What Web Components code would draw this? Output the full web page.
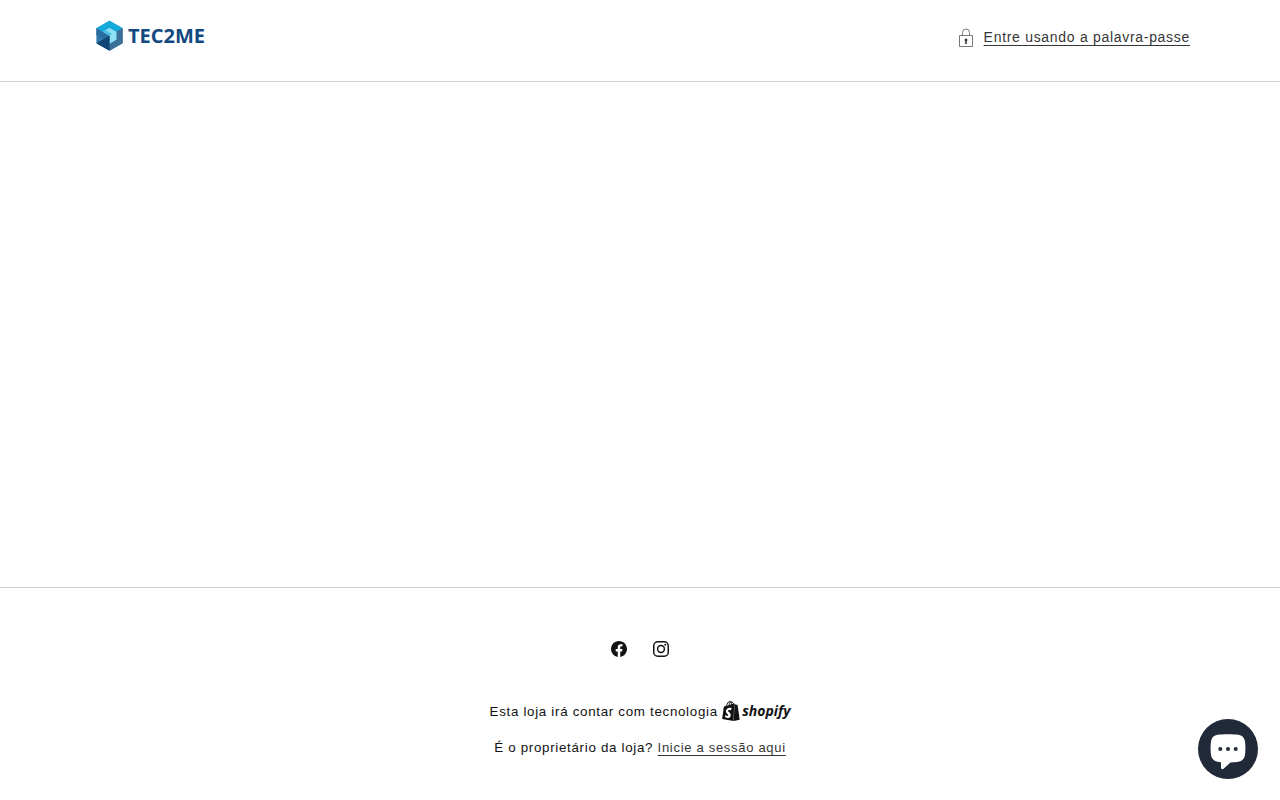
<!DOCTYPE html>
<html lang="pt-PT">
<head>
<meta charset="utf-8">
<meta name="viewport" content="width=device-width, initial-scale=1">
<title>TEC2ME</title>
<style>
  html {
    font-size: 62.5%;
  }
  body {
    margin: 0;
    background: #fff;
    color: #121212;
    font-family: "Liberation Sans", Arial, sans-serif;
    font-size: 1.6rem;
    letter-spacing: 0.07rem;
  }
</style>
</head>
<body>
<password-page>
  <password-header slot="header">
    <store-logo slot="logo">TEC2ME</store-logo>
    <password-opener>Entre usando a palavra-passe</password-opener>
  </password-header>
  <password-footer slot="footer">
    <social-link slot="social" name="facebook" href="#facebook"></social-link>
    <social-link slot="social" name="instagram" href="#instagram"></social-link>
    <small slot="text">Esta loja irá contar com tecnologia <shopify-mark>shopify</shopify-mark></small>
    <small slot="text">É o proprietário da loja? <text-link href="#admin">Inicie a sessão aqui</text-link></small>
  </password-footer>
</password-page>
<chat-button></chat-button>

<script>
class PasswordPage extends HTMLElement {
  constructor() {
    super();
    this.attachShadow({ mode: 'open' }).innerHTML = `
      <style>
        :host {
          display: flex;
          flex-direction: column;
          min-height: 100vh;
        }
        main {
          flex: 1;
        }
      </style>
      <slot name="header"></slot>
      <main></main>
      <slot name="footer"></slot>
    `;
  }
}

class PasswordHeader extends HTMLElement {
  constructor() {
    super();
    this.attachShadow({ mode: 'open' }).innerHTML = `
      <style>
        :host {
          display: block;
          border-bottom: 1px solid #d0d0d0;
        }
        header {
          display: flex;
          align-items: flex-start;
          justify-content: space-between;
          max-width: 1100px;
          margin: 0 auto;
          padding: 20px 50px 29px;
        }
      </style>
      <header>
        <slot name="logo"></slot>
        <slot></slot>
      </header>
    `;
  }
}

class StoreLogo extends HTMLElement {
  constructor() {
    super();
    this.attachShadow({ mode: 'open' }).innerHTML = `
      <style>
        :host {
          display: flex;
          align-items: center;
          gap: 5px;
          height: 32px;
          padding-left: 6px;
          color: #12497f;
          font: bold 20px/32px "Open Sans", sans-serif;
          letter-spacing: normal;
        }
        svg {
          width: 27px;
          height: 32px;
        }
      </style>
      <svg viewBox="0 0 27 32" aria-hidden="true">
        <path fill="#2f78a8" d="M13.500 .8 26.600 8.300v15L13.500 30.800.4 23.300v-15z"/>
        <path fill="#14aadb" d="M13.500 .8 26.600 8.300 20.500 11.800 13.500 7.800 6.500 11.800.4 8.300z"/>
        <path fill="#3a6f98" d="M26.600 8.300v15L13.500 30.800v-7l7-4v-8z"/>
        <path fill="#8fe0f5" d="M6.500 11.800l7-4 7 4v8l-7 4v-8z"/>
        <path fill="#2a6d9f" d="M.4 8.300l13.100 7.500v5L.4 15z"/>
        <path fill="#4fbfe2" d="M6.500 11.800l3-1.700 6.500 3.700-2.500 2z"/>
        <path fill="#0f4474" d="M.4 23.300 13.500 15.800v15z"/>
      </svg>
      <slot></slot>
    `;
  }
}

class PasswordOpener extends HTMLElement {
  constructor() {
    super();
    this.attachShadow({ mode: 'open' }).innerHTML = `
      <style>
        :host {
          display: block;
          padding-top: 7px;
        }
        button {
          display: flex;
          align-items: center;
          gap: 8px;
          padding: 0;
          border: 0;
          background: none;
          color: #363636;
          font: inherit;
          font-size: 1.4rem;
          line-height: 20px;
          letter-spacing: inherit;
          cursor: pointer;
        }
        span {
          text-decoration: underline;
          text-decoration-skip-ink: none;
          text-underline-offset: 3px;
        }
        svg {
          width: 20px;
          height: 20px;
        }
      </style>
      <button type="button" aria-haspopup="dialog">
        <svg viewBox="0 0 20 20" fill="none" stroke="#777" aria-hidden="true">
          <path d="M3.500 8.500h13v11h-13zM6.500 8.500V5.500a3.500 3.500 0 0 1 7 0v3"/>
          <path stroke="none" fill="#333" d="M10 11.500a1.500 1.500 0 0 1 .8 2.700v2.800H9.200v-2.800a1.500 1.500 0 0 1 .8-2.700z"/>
        </svg>
        <span><slot></slot></span>
      </button>
    `;
  }
}

class PasswordFooter extends HTMLElement {
  constructor() {
    super();
    this.attachShadow({ mode: 'open' }).innerHTML = `
      <style>
        :host {
          display: block;
          border-top: 1px solid #d0d0d0;
        }
        footer {
          display: flex;
          flex-direction: column;
          align-items: center;
          gap: 31px;
          padding: 40px 20px 41px;
        }
        .social {
          display: flex;
        }
        .text {
          display: flex;
          flex-direction: column;
          align-items: center;
          gap: 14px;
        }
        ::slotted(small) {
          line-height: 22px;
          text-align: center;
        }
      </style>
      <footer>
        <div class="social"><slot name="social"></slot></div>
        <div class="text"><slot name="text"></slot></div>
      </footer>
    `;
  }
}

const socialIcons = {
  facebook: `<path fill="currentColor" d="M18 10.049C18 5.603 14.419 2 10 2c-4.419 0-8 3.603-8 8.049C2 14.067 4.925 17.396 8.750 18v-5.624H6.719v-2.328h2.030V8.275c0-2.017 1.195-3.132 3.023-3.132.874 0 1.790.158 1.790.158v1.980h-1.009c-.994 0-1.303.621-1.303 1.258v1.510h2.219l-.355 2.326H11.250V18c3.825-.604 6.750-3.933 6.750-7.951Z"/>`,
  instagram: `
    <rect x="2.750" y="2.750" width="14.500" height="14.500" rx="4" fill="none" stroke="currentColor" stroke-width="1.500"/>
    <circle cx="10" cy="10" r="3.400" fill="none" stroke="currentColor" stroke-width="1.500"/>
    <circle cx="14.300" cy="5.700" r="1" fill="currentColor"/>`
};

class SocialLink extends HTMLElement {
  constructor() {
    super();
    const name = this.getAttribute('name');
    this.attachShadow({ mode: 'open' }).innerHTML = `
      <style>
        :host {
          display: block;
        }
        a {
          display: flex;
          padding: 11px;
          color: #121212;
        }
        svg {
          width: 20px;
          height: 20px;
        }
      </style>
      <a href="${this.getAttribute('href')}" aria-label="${name}">
        <svg viewBox="0 0 20 20" aria-hidden="true">${socialIcons[name]}</svg>
      </a>
    `;
  }
}

class ShopifyMark extends HTMLElement {
  constructor() {
    super();
    this.attachShadow({ mode: 'open' }).innerHTML = `
      <style>
        :host {
          display: inline-block;
          vertical-align: top;
        }
        a {
          display: flex;
          align-items: center;
          gap: 2px;
          height: 20px;
          color: #121212;
          font: italic bold 14px/20px "Open Sans", sans-serif;
          letter-spacing: normal;
          text-decoration: none;
        }
        svg {
          width: 18px;
          height: 20px;
        }
      </style>
      <a href="#shopify">
        <svg viewBox="1.200 0 21.600 24" fill="currentColor" aria-hidden="true">
          <path d="M15.337 23.979l7.216-1.561s-2.604-17.613-2.625-17.730c-.018-.116-.114-.192-.211-.192s-1.929-.136-1.929-.136-1.275-1.274-1.439-1.411c-.045-.037-.075-.057-.121-.074l-.914 21.104h.023zM11.710 11.305s-.81-.424-1.774-.424c-1.447 0-1.504.906-1.504 1.141 0 1.232 3.240 1.715 3.240 4.629 0 2.295-1.440 3.760-3.406 3.760-2.354 0-3.540-1.465-3.540-1.465l.646-2.086s1.245 1.066 2.280 1.066c.675 0 .975-.545.975-.932 0-1.619-2.654-1.694-2.654-4.359-.034-2.237 1.571-4.416 4.827-4.416 1.257 0 1.875.361 1.875.361l-.945 2.715-.02.01zM11.170.83c.136 0 .271.038.405.135-.984.465-2.064 1.639-2.508 3.992-.656.213-1.293.405-1.889.578C7.697 3.750 8.951.84 11.170.84V.83zm1.235 2.949v.135c-.754.232-1.583.484-2.394.736.466-1.777 1.333-2.645 2.085-2.971.193.501.309 1.176.309 2.100zm.539-2.234c.694.074 1.141.867 1.429 1.755-.349.114-.735.231-1.158.366v-.252c0-.752-.096-1.371-.271-1.871v.002zm2.992 1.289c-.02 0-.06.021-.078.021s-.289.075-.714.210c-.423-1.233-1.176-2.370-2.508-2.370h-.115C12.135.209 11.669 0 11.265 0 8.159 0 6.675 3.877 6.210 5.846c-1.194.365-2.063.636-2.160.674-.675.213-.694.232-.772.870-.075.462-1.830 14.063-1.830 14.063L15.009 24l.927-21.166z"/>
        </svg>
        <slot></slot>
      </a>
    `;
  }
}

class TextLink extends HTMLElement {
  constructor() {
    super();
    this.attachShadow({ mode: 'open' }).innerHTML = `
      <style>
        :host {
          display: inline;
        }
        a {
          color: #363636;
          font-size: 1.3rem;
          text-decoration: underline;
          text-decoration-skip-ink: none;
          text-underline-offset: 3px;
        }
      </style>
      <a href="${this.getAttribute('href')}"><slot></slot></a>
    `;
  }
}

class ChatButton extends HTMLElement {
  constructor() {
    super();
    this.attachShadow({ mode: 'open' }).innerHTML = `
      <style>
        :host {
          display: block;
          position: fixed;
          right: 22px;
          bottom: 21px;
        }
        button {
          display: block;
          width: 60px;
          height: 60px;
          padding: 0;
          border: 0;
          border-radius: 50%;
          background: #202a39;
          cursor: pointer;
        }
        svg {
          display: block;
        }
      </style>
      <button type="button" aria-label="Chat">
        <svg width="60" height="60" viewBox="0 0 60 60" aria-hidden="true">
          <path fill="#fff" d="M30 15.200c4.500 0 8 .2 10.500.6 3.600.6 5.800 2.800 6.400 6.200.7 4 .7 10.500 0 14.600-.6 3.400-2.800 5.500-6.400 6.200-2 .4-4.800.6-8 .7l-7 6.200c-1.100 1-2.500.3-2.500-1.100v-5.300c-1.300-.1-2.500-.3-3.500-.5-3.600-.7-5.800-2.800-6.400-6.200-.7-4.100-.7-10.600 0-14.600.6-3.400 2.800-5.600 6.400-6.200 2.500-.4 6-.6 10.500-.6z"/>
          <g fill="#202a39">
            <circle cx="22.300" cy="30" r="2"/>
            <circle cx="30" cy="30" r="2"/>
            <circle cx="37.700" cy="30" r="2"/>
          </g>
        </svg>
      </button>
    `;
  }
}

customElements.define('password-page', PasswordPage);
customElements.define('password-header', PasswordHeader);
customElements.define('store-logo', StoreLogo);
customElements.define('password-opener', PasswordOpener);
customElements.define('password-footer', PasswordFooter);
customElements.define('social-link', SocialLink);
customElements.define('shopify-mark', ShopifyMark);
customElements.define('text-link', TextLink);
customElements.define('chat-button', ChatButton);
</script>
</body>
</html>
